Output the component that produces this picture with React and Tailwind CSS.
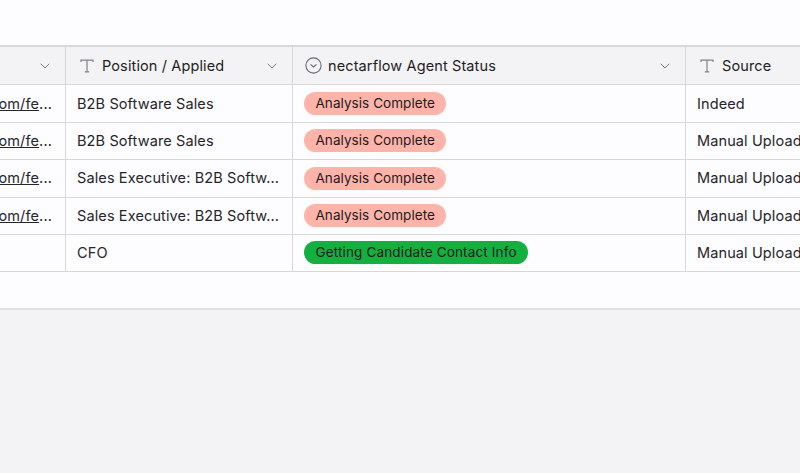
import { ChevronDown } from "lucide-react";

const rows = [
  { link: true, position: "B2B Software Sales", status: "Analysis Complete", source: "Indeed" },
  { link: true, position: "B2B Software Sales", status: "Analysis Complete", source: "Manual Upload" },
  { link: true, position: "Sales Executive: B2B Softw...", status: "Analysis Complete", source: "Manual Upload" },
  { link: true, position: "Sales Executive: B2B Softw...", status: "Analysis Complete", source: "Manual Upload" },
  { link: false, position: "CFO", status: "Getting Candidate Contact Info", source: "Manual Upload" },
];

const heights = ["h-[38px]", "h-[37px] pb-[1px]", "h-[38px] pb-[1px]", "h-[37px] pb-[1px]", "h-[37px] pb-[1px]"];

function TextIcon() {
  return (
    <svg width="14" height="14" viewBox="0 0 14 14" fill="none" stroke="#838287" strokeWidth="1.2" className="shrink-0">
      <path d="M1 3V1.2H13V3M7 1.2V12.8M4.8 12.8H9.2" />
    </svg>
  );
}

function SelectIcon() {
  return (
    <svg width="17" height="17" viewBox="0 0 17 17" fill="none" stroke="#6b6a70" strokeWidth="1.1" className="shrink-0">
      <circle cx="8.5" cy="8.5" r="7.6" />
      <path d="M5.5 7.4L8.5 10L11.5 7.4" />
    </svg>
  );
}

function Chevron() {
  return <ChevronDown size={16} strokeWidth={1.4} className="text-[#77767b] shrink-0" />;
}

function Badge({ label }) {
  const color = label === "Analysis Complete" ? "bg-[#ffb3a9] tracking-[0.06px]" : "bg-[#12b03f] tracking-[0.15px]";
  return (
    <span className={`${color} h-[23px] px-[11.5px] rounded-full flex items-center whitespace-nowrap text-[13.5px] text-[#1c1b1f]`}>
      {label}
    </span>
  );
}

export default function App() {
  return (
    <div
      className="w-[800px] h-[473px] overflow-hidden bg-[#f3f2f4] text-[14.5px] tracking-[0.12px] text-[#26252a]"
      style={{ fontFamily: "Inter, sans-serif" }}
    >
      <div className="h-[45px] bg-[#fdfcfe]" />
      <div className="border-t-2 border-[#d8d7da] bg-[#fdfcfe] grid grid-cols-[66px_227px_393px_114px]">
        {/* header */}
        <div className="h-[38px] bg-[#f3f2f4] border-b border-r border-[#d8d7da] flex items-center justify-end pr-[12px]">
          <Chevron />
        </div>
        <div className="h-[38px] bg-[#f3f2f4] border-b border-r border-[#d8d7da] flex items-center pl-[14px] pr-[12px] gap-[8px]">
          <TextIcon />
          <span className="flex-1 text-[#1f1e23]">Position / Applied</span>
          <Chevron />
        </div>
        <div className="h-[38px] bg-[#f3f2f4] border-b border-r border-[#d8d7da] flex items-center pl-[12px] pr-[12px] gap-[6px]">
          <SelectIcon />
          <span className="flex-1 text-[#1f1e23]">nectarflow Agent Status</span>
          <Chevron />
        </div>
        <div className="h-[38px] bg-[#f3f2f4] border-b border-[#d8d7da] flex items-center pl-[14px] gap-[8px]">
          <TextIcon />
          <span className="text-[#1f1e23]">Source</span>
        </div>

        {rows.map((row, i) => (
          <div key={i} className="contents">
            <div className={`${heights[i]} border-b border-r border-[#d8d7da] flex items-center justify-end pr-[13px] overflow-hidden`}>
              {row.link && (
                <span className="whitespace-nowrap">
                  <span className="underline">om/fe</span>...
                </span>
              )}
            </div>
            <div className={`${heights[i]} border-b border-r border-[#d8d7da] flex items-center pl-[11px] whitespace-nowrap overflow-hidden`}>
              {row.position}
            </div>
            <div className={`${heights[i]} border-b border-r border-[#d8d7da] flex items-center pl-[11px]`}>
              <Badge label={row.status} />
            </div>
            <div className={`${heights[i]} border-b border-[#d8d7da] flex items-center pl-[11px] whitespace-nowrap overflow-hidden`}>
              {row.source}
            </div>
          </div>
        ))}
      </div>
      <div className="h-[38px] bg-[#fdfcfe] border-b-2 border-[#e0dfe2]" />
    </div>
  );
}
